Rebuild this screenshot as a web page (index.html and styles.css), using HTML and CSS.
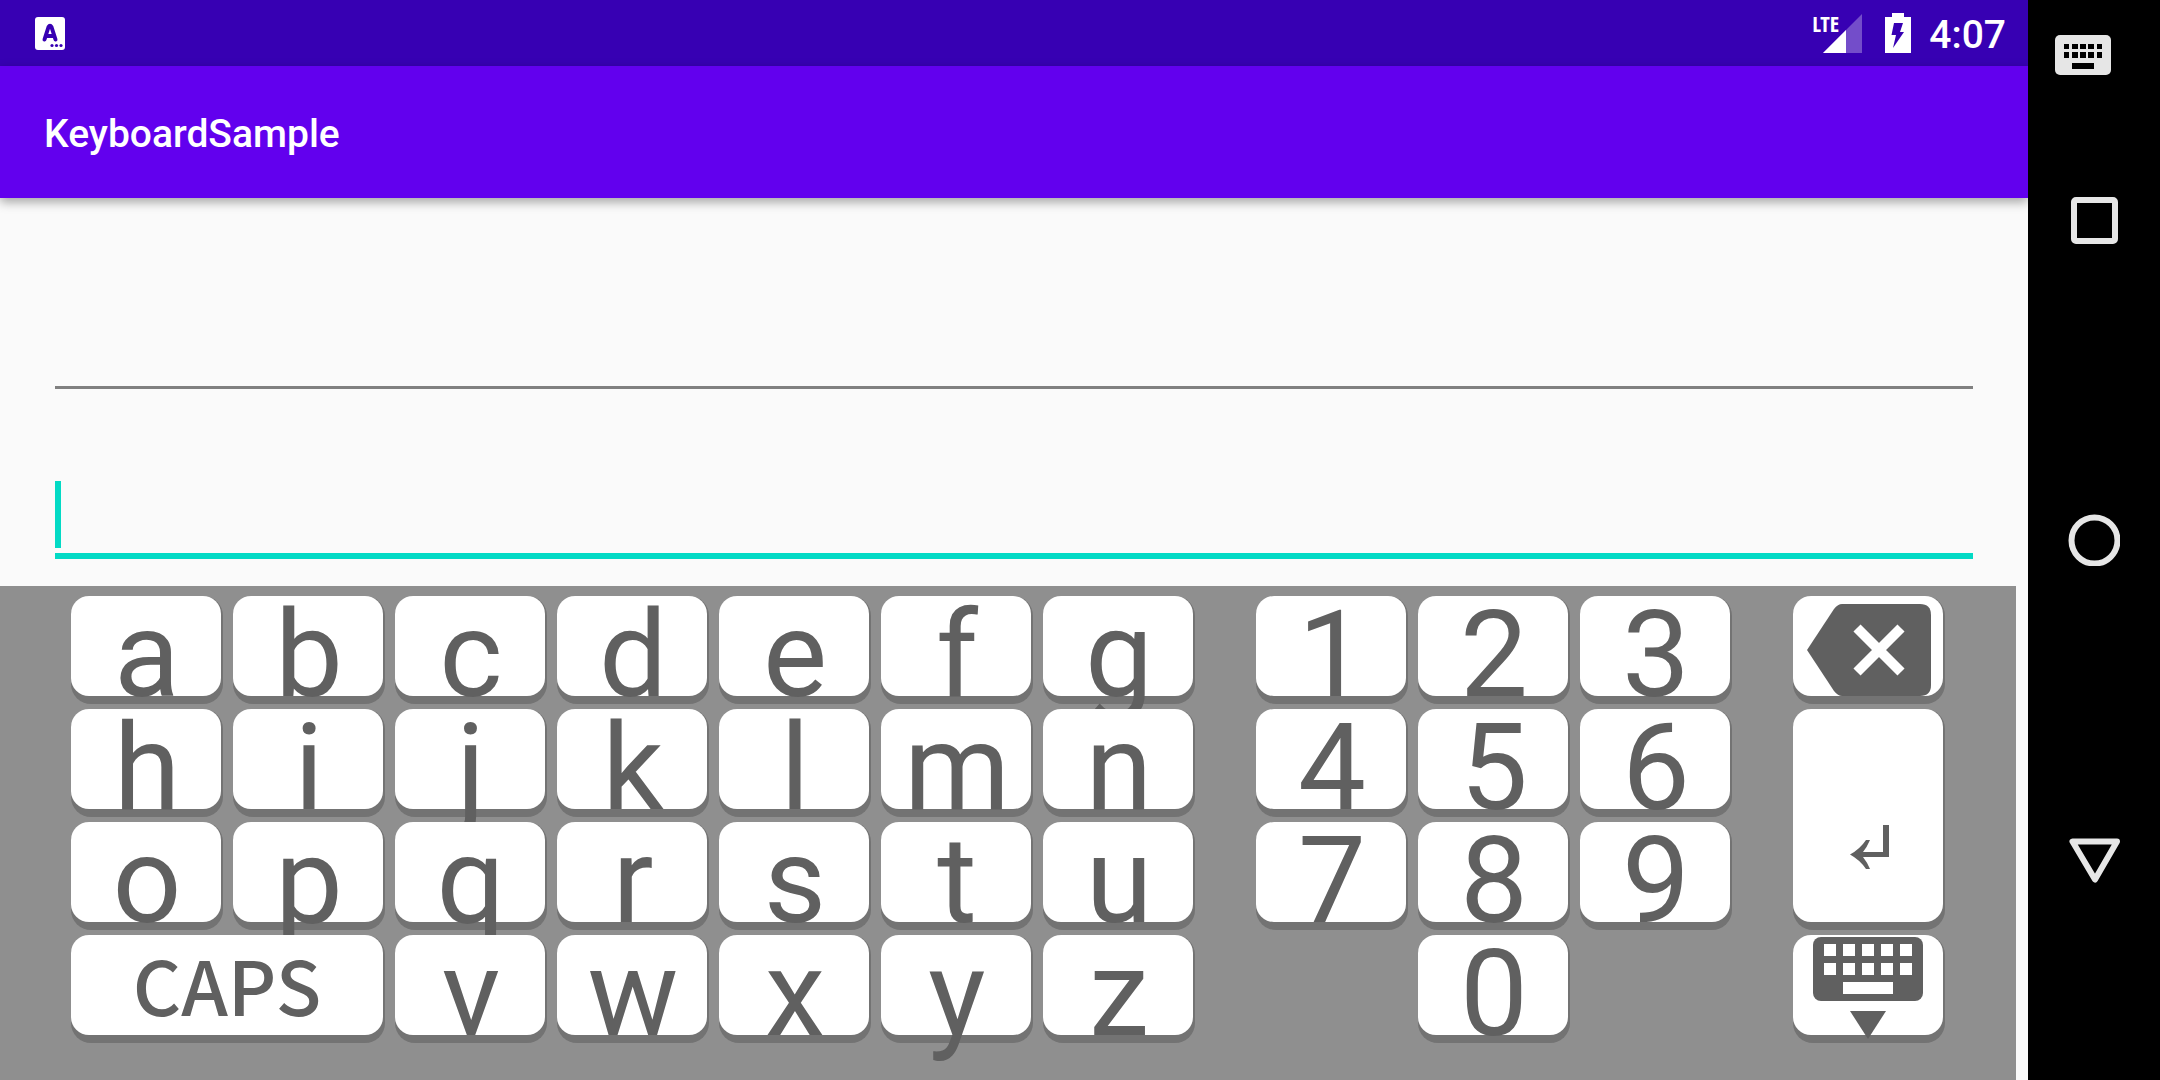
FILE: index.html
```html
<!DOCTYPE html>
<html lang="en">
<head>
<meta charset="utf-8">
<meta name="viewport" content="width=device-width, initial-scale=1">
<title>KeyboardSample</title>
<link rel="stylesheet" href="styles.css">
</head>
<body>
<div class="device">
  <div class="screen">
    <header class="status-bar">
      <svg class="ime-icon" width="30" height="33" viewBox="0 0 30 33" aria-hidden="true">
        <rect width="30" height="33" rx="3" fill="#fff"/>
        <path d="M9.500 22.500L13.500 10Q15 7.500 16.500 10L20.500 22.500M11 19H19" fill="none" stroke="#3700b3" stroke-width="4" stroke-linecap="round" stroke-linejoin="round"/>
        <g fill="#3700b3"><circle cx="17" cy="28.500" r="1.600"/><circle cx="21.500" cy="28.500" r="1.600"/><circle cx="26" cy="28.500" r="1.600"/></g>
      </svg>
      <div class="status-right">
        <div class="signal">
          <span class="network">LTE</span>
          <svg width="39" height="39" viewBox="0 0 39 39" aria-hidden="true">
            <path d="M0 39L39 0V39Z" fill="#fff" opacity=".3"/>
            <path d="M0 39L23 16V39Z" fill="#fff"/>
          </svg>
        </div>
        <svg class="battery" width="26" height="40" viewBox="0 0 26 40" aria-hidden="true">
          <path d="M7 0H19V4H26V40H0V4H7Z" fill="#fff"/>
          <path d="M9 10H18L15 19H19L8 35L11 22H6.500Z" fill="#3700b3"/>
        </svg>
        <time class="clock">4:07</time>
      </div>
    </header>
    <div class="app-bar"><h1 class="title">KeyboardSample</h1></div>
    <main class="form">
      <input class="field" type="text" aria-label="First text">
      <div class="field-wrap">
        <input class="field field-active" type="text" aria-label="Second text">
        <span class="caret"></span>
      </div>
    </main>
    <section class="keyboard" aria-label="Keyboard">
      <div class="keys letters">
        <button class="key"><span class="face">a</span></button>
        <button class="key"><span class="face">b</span></button>
        <button class="key"><span class="face">c</span></button>
        <button class="key"><span class="face">d</span></button>
        <button class="key"><span class="face">e</span></button>
        <button class="key"><span class="face">f</span></button>
        <button class="key"><span class="face">g</span></button>
        <button class="key"><span class="face">h</span></button>
        <button class="key"><span class="face">i</span></button>
        <button class="key"><span class="face">j</span></button>
        <button class="key"><span class="face">k</span></button>
        <button class="key"><span class="face">l</span></button>
        <button class="key"><span class="face">m</span></button>
        <button class="key"><span class="face">n</span></button>
        <button class="key"><span class="face">o</span></button>
        <button class="key"><span class="face">p</span></button>
        <button class="key"><span class="face">q</span></button>
        <button class="key"><span class="face">r</span></button>
        <button class="key"><span class="face">s</span></button>
        <button class="key"><span class="face">t</span></button>
        <button class="key"><span class="face">u</span></button>
        <button class="key key-wide"><span class="face face-caps">CAPS</span></button>
        <button class="key"><span class="face">v</span></button>
        <button class="key"><span class="face">w</span></button>
        <button class="key"><span class="face">x</span></button>
        <button class="key"><span class="face">y</span></button>
        <button class="key"><span class="face">z</span></button>
      </div>
      <div class="keys digits">
        <button class="key"><span class="face">1</span></button>
        <button class="key"><span class="face">2</span></button>
        <button class="key"><span class="face">3</span></button>
        <button class="key"><span class="face">4</span></button>
        <button class="key"><span class="face">5</span></button>
        <button class="key"><span class="face">6</span></button>
        <button class="key"><span class="face">7</span></button>
        <button class="key"><span class="face">8</span></button>
        <button class="key"><span class="face">9</span></button>
        <button class="key key-zero"><span class="face">0</span></button>
      </div>
      <div class="keys actions">
        <button class="key" aria-label="Backspace"><span class="face">
          <svg width="150" height="100" viewBox="0 0 150 100" aria-hidden="true">
            <path d="M14 54L41 13Q45 8 49 8H127Q138 8 138 19V89Q138 100 127 100H49Q45 100 41 95Z" fill="#606060"/>
            <path d="M64 32L108 76M108 32L64 76" stroke="#fff" stroke-width="10"/>
          </svg></span></button>
        <button class="key key-tall" aria-label="Enter"><span class="face">
          <svg width="150" height="213" viewBox="0 0 150 213" aria-hidden="true">
            <path d="M90 116H96V148H70Q74 153 77 160H73Q67 151 57 145.500Q67 140 73 131H77Q74 138 70 143H90Z" fill="#606060"/>
          </svg></span></button>
        <button class="key" aria-label="Hide keyboard"><span class="face">
          <svg width="150" height="108" viewBox="0 0 150 108" aria-hidden="true">
            <rect x="20" y="2" width="110" height="64" rx="8" fill="#606060"/>
            <g fill="#fff">
              <path d="M31 9h12v12h-12zM50 9h12v12h-12zM69 9h12v12h-12zM88 9h12v12h-12zM107 9h12v12h-12z"/>
              <path d="M31 28h12v12h-12zM50 28h12v12h-12zM69 28h12v12h-12zM88 28h12v12h-12zM107 28h12v12h-12z"/>
              <path d="M50 47h50v12h-50z"/>
            </g>
            <path d="M57 76H93L75 104Z" fill="#606060"/>
          </svg></span></button>
      </div>
    </section>
  </div>
  <nav class="nav-bar" aria-label="System navigation">
    <button class="nav-button nav-ime" aria-label="Switch keyboard">
      <svg width="56" height="40" viewBox="0 0 56 40" aria-hidden="true">
        <rect width="56" height="40" rx="5" fill="#e6e6e6"/>
        <path d="M9 9h5v5h-5zM17 9h6v5h-6zM25 9h6v5h-6zM33 9h6v5h-6zM42 9h5v5h-5zM9 17h5v6h-5zM17 17h6v6h-6zM25 17h6v6h-6zM33 17h6v6h-6zM42 17h5v6h-5zM17 28h22v6h-22z" fill="#000"/>
      </svg>
    </button>
    <div class="nav-main">
      <button class="nav-button" aria-label="Overview">
        <svg width="52" height="52" viewBox="0 0 52 52" aria-hidden="true"><rect x="6" y="6" width="41" height="41" rx="2" fill="none" stroke="#e6e6e6" stroke-width="6"/></svg>
      </button>
      <button class="nav-button" aria-label="Home">
        <svg width="52" height="52" viewBox="0 0 52 52" aria-hidden="true"><circle cx="26.500" cy="26.500" r="23" fill="none" stroke="#e6e6e6" stroke-width="6"/></svg>
      </button>
      <button class="nav-button" aria-label="Back">
        <svg width="52" height="52" viewBox="0 0 52 52" aria-hidden="true"><path d="M4.500 7.500H49L27 45.500Z" fill="none" stroke="#e6e6e6" stroke-width="6" stroke-linejoin="round"/></svg>
      </button>
    </div>
  </nav>
</div>
</body>
</html>
```
FILE: styles.css
```css
* {
  box-sizing: border-box;
}

body {
  margin: 0;
  background: #fafafa;
  font-family: Roboto, sans-serif;
}

button {
  border: 0;
  margin: 0;
  font: inherit;
  color: inherit;
}

svg {
  display: block;
}

.device {
  display: flex;
  min-height: 100vh;
}

.screen {
  flex: 1;
  display: flex;
  flex-direction: column;
}

.status-bar {
  display: flex;
  justify-content: space-between;
  align-items: center;
  height: 66px;
  padding: 0 22px 0 35px;
  background: #3700b3;
  color: #fff;
}

.status-right {
  display: flex;
  align-items: center;
}

.signal {
  position: relative;
  margin-right: 23px;
}

.network {
  position: absolute;
  right: 23px;
  top: -3px;
  font: 700 22px/24px "Open Sans Condensed", "Liberation Sans Narrow", Roboto, sans-serif;
}

.battery {
  margin-right: 18px;
}

.clock {
  padding-top: 4px;
  font-size: 39px;
  font-weight: 500;
  line-height: 62px;
}

.app-bar {
  display: flex;
  align-items: center;
  height: 132px;
  padding: 4px 44px 0;
  background: #6200ee;
  box-shadow: 0 4px 10px rgba(0, 0, 0, 0.35);
}

.title {
  margin: 0;
  color: #fff;
  font-size: 39px;
  font-weight: 500;
  line-height: 48px;
}

.form {
  flex: 1;
  display: flex;
  flex-direction: column;
  gap: 67px;
  padding: 88px 55px 27px;
}

.field {
  display: block;
  width: 100%;
  height: 103px;
  padding: 0 0 10px;
  border: 0;
  border-bottom: 3px solid #808080;
  background: none;
  color: #212121;
  font: 400 50px/60px Roboto, sans-serif;
  outline: none;
}

.field-wrap {
  position: relative;
}

.field-active {
  border-bottom: 6px solid #03dac5;
}

.caret {
  position: absolute;
  left: 0;
  bottom: 11px;
  width: 6px;
  height: 67px;
  background: #03dac5;
}

.keyboard {
  display: flex;
  gap: 61px;
  margin-right: 12px;
  padding: 10px 71px 37px;
  background: #8f8f8f;
  color: #606060;
}

.keys {
  display: grid;
  grid-auto-rows: 108px;
  gap: 5px 10px;
}

.letters {
  flex: 1124 1 0;
  grid-template-columns: repeat(7, minmax(0, 1fr));
}

.digits {
  flex: 476 1 0;
  grid-template-columns: repeat(3, minmax(0, 1fr));
}

.actions {
  flex: 152 1 0;
  grid-template-columns: minmax(0, 1fr);
}

.key {
  display: flex;
  padding: 0 2px 8px 0;
  border-radius: 20px;
  background: #737373;
}

.key-wide {
  grid-column: span 2;
}

.key-tall {
  grid-row: span 2;
}

.key-zero {
  grid-column: 2;
}

.face {
  flex: 1;
  display: flex;
  justify-content: center;
  align-self: stretch;
  height: 100%;
  border-radius: 18px;
  background: #fff;
  font-size: 121px;
  line-height: 118px;
  text-indent: 2px;
}

.face-caps {
  font-family: "Noto Sans CJK JP", sans-serif;
  font-size: 75px;
  font-weight: 500;
  line-height: 97px;
  text-indent: 0;
}

.nav-bar {
  flex: 0 0 132px;
  display: flex;
  flex-direction: column;
  align-items: center;
  gap: 119px;
  padding: 35px 0 194px;
  background: #000;
}

.nav-main {
  flex: 1;
  display: flex;
  flex-direction: column;
  justify-content: space-between;
}

.nav-button {
  padding: 0;
  background: none;
}

.nav-ime {
  margin-right: 22px;
}
```
